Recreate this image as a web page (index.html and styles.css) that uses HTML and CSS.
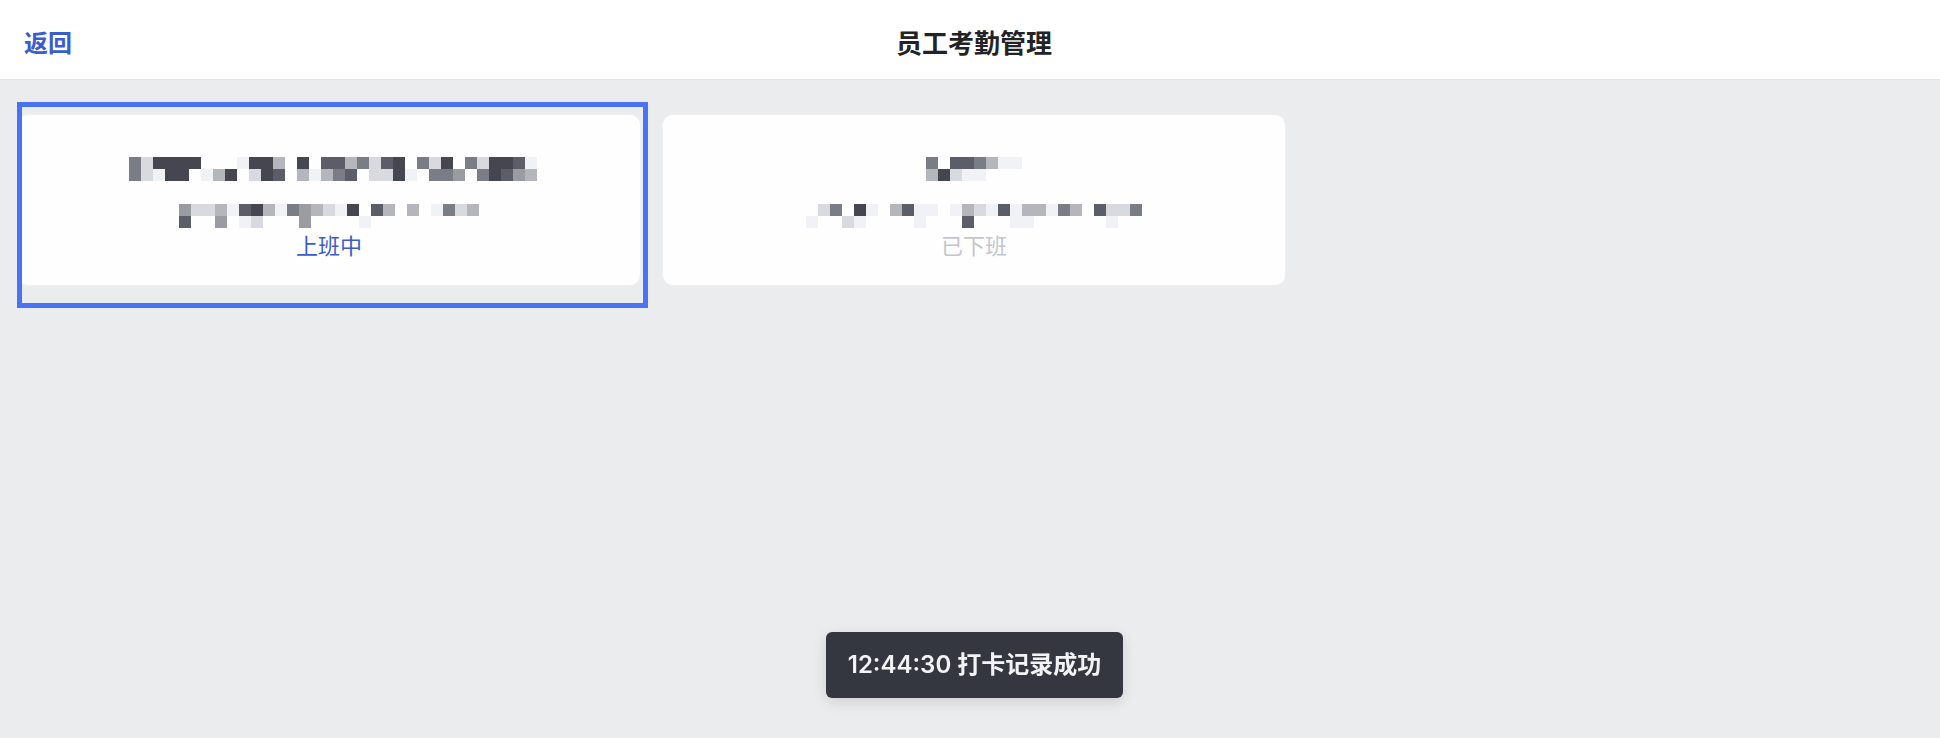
FILE: index.html
```html
<!DOCTYPE html>
<html lang="zh-CN">
<head>
<meta charset="utf-8">
<title>员工考勤管理</title>
<link rel="stylesheet" href="styles.css">
</head>
<body>
<header class="topbar">
  <a class="back">返回</a>
  <h1 class="title">员工考勤管理</h1>
  <span class="spacer"></span>
</header>
<main class="content">
  <div class="grid">
    <div class="card-wrap selected">
      <div class="card">
        <div class="mosaic shift">
          <div class="mrow"><i class="e"></i><i class="b"></i><i class="g"></i><i class="g"></i><i class="g"></i><i class="g"></i><i></i><i></i><i></i><i class="a"></i><i class="g"></i><i class="g"></i><i class="c"></i><i></i><i class="g"></i><i></i><i class="f"></i><i class="f"></i><i class="c"></i><i class="e"></i><i class="b"></i><i class="f"></i><i class="g"></i><i></i><i class="e"></i><i class="b"></i><i class="g"></i><i></i><i class="e"></i><i class="b"></i><i class="g"></i><i class="g"></i><i class="f"></i><i class="a"></i></div>
          <div class="mrow"><i class="e"></i><i class="b"></i><i class="a"></i><i class="g"></i><i class="g"></i><i></i><i class="a"></i><i class="c"></i><i class="g"></i><i></i><i class="b"></i><i class="g"></i><i class="f"></i><i></i><i class="c"></i><i class="a"></i><i class="c"></i><i class="e"></i><i class="f"></i><i></i><i class="b"></i><i class="b"></i><i class="g"></i><i class="a"></i><i></i><i class="e"></i><i class="e"></i><i class="d"></i><i></i><i class="e"></i><i class="g"></i><i class="f"></i><i class="d"></i><i class="c"></i></div>
        </div>
        <div class="mosaic line2">
          <div class="mrow"><i class="d"></i><i class="b"></i><i class="b"></i><i class="c"></i><i class="a"></i><i class="f"></i><i class="g"></i><i class="c"></i><i class="a"></i><i class="e"></i><i class="d"></i><i class="c"></i><i class="b"></i><i class="a"></i><i class="g"></i><i></i><i class="f"></i><i class="c"></i><i></i><i class="c"></i><i></i><i class="a"></i><i class="e"></i><i class="b"></i><i class="c"></i></div>
          <div class="mrow"><i class="f"></i><i></i><i></i><i class="d"></i><i></i><i class="a"></i><i class="b"></i><i></i><i></i><i></i><i class="d"></i><i></i><i></i><i></i><i></i><i class="a"></i><i></i><i></i><i></i><i></i><i></i><i></i><i></i><i></i><i></i></div>
        </div>
        <div class="status on">上班中</div>
      </div>
      <div class="focus-ring"></div>
    </div>
    <div class="card-wrap">
      <div class="card">
        <div class="mosaic">
          <div class="mrow"><i class="e"></i><i></i><i class="f"></i><i class="f"></i><i class="e"></i><i class="c"></i><i class="a"></i><i class="a"></i></div>
          <div class="mrow"><i class="c"></i><i class="g"></i><i class="b"></i><i class="a"></i><i class="a"></i><i></i><i></i><i></i></div>
        </div>
        <div class="mosaic line2">
          <div class="mrow"><i></i><i class="b"></i><i class="e"></i><i></i><i class="g"></i><i class="a"></i><i></i><i class="c"></i><i class="f"></i><i class="a"></i><i class="a"></i><i></i><i class="a"></i><i class="c"></i><i class="b"></i><i class="a"></i><i class="f"></i><i class="a"></i><i class="c"></i><i class="c"></i><i class="a"></i><i class="e"></i><i class="c"></i><i></i><i class="f"></i><i class="b"></i><i class="b"></i><i class="e"></i></div>
          <div class="mrow"><i class="a"></i><i></i><i></i><i class="b"></i><i class="a"></i><i></i><i></i><i></i><i></i><i class="a"></i><i></i><i></i><i></i><i class="f"></i><i></i><i></i><i></i><i class="a"></i><i class="a"></i><i></i><i></i><i></i><i></i><i></i><i></i><i class="a"></i><i></i><i></i></div>
        </div>
        <div class="status off">已下班</div>
      </div>
    </div>
  </div>
</main>
<div class="toast">12:44:30 打卡记录成功</div>
</body>
</html>
```
FILE: styles.css
```css
* { box-sizing: border-box; }
html, body { margin: 0; padding: 0; }
body {
  width: 1940px;
  height: 738px;
  overflow: hidden;
  background: #ebecee;
  font-family: "Inter", "Noto Sans CJK SC", sans-serif;
  color: #222;
}
.topbar {
  height: 79px;
  padding: 9px 0 0 24px;
  background: #fff;
  box-shadow: 0 1px 0 #e3e4e7;
  display: grid;
  grid-template-columns: 1fr auto 1fr;
  align-items: center;
  position: relative;
  z-index: 1;
}
.back {
  font-size: 24px;
  font-weight: 700;
  color: #3a5ccf;
  line-height: 30px;
  justify-self: start;
}
.title {
  margin: 0 0 0 -16px;
  font-size: 26px;
  font-weight: 600;
  line-height: 30px;
  color: #222326;
}
.content {
  padding: 36px 0 0 18px;
}
.grid {
  display: grid;
  grid-template-columns: repeat(3, 622px);
  column-gap: 23px;
}
.card-wrap { position: relative; }
.card {
  height: 170px;
  background: #fefefe;
  border-radius: 10px;
  box-shadow: 0 0 0 1px #eff0f2;
  padding-top: 42px;
  display: flex;
  flex-direction: column;
  align-items: center;
}
.focus-ring {
  position: absolute;
  top: -13px;
  left: -1px;
  right: -8px;
  bottom: -23px;
  border: 5px solid #4a72f4;
  pointer-events: none;
}
.mosaic { display: flex; flex-direction: column; }
.mosaic.shift { margin-left: 8px; }
.mosaic.line2 { margin-top: 23px; }
.mrow { display: flex; height: 12px; }
.mrow i { display: block; width: 12px; height: 12px; background: transparent; }
.mrow i.a { background: #f1f2f5; }
.mrow i.b { background: #d8dadf; }
.mrow i.c { background: #b4b6bc; }
.mrow i.d { background: #9a9ca2; }
.mrow i.e { background: #7a7d85; }
.mrow i.f { background: #5b5e68; }
.mrow i.g { background: #45464f; }
.status {
  margin-top: 1px;
  font-size: 22px;
  line-height: 30px;
  font-family: "Noto Sans CJK SC", sans-serif;
}
.status.on { color: #3a5dcd; }
.status.off { color: #c3c6cd; }
.toast {
  position: fixed;
  top: 632px;
  left: 826px;
  width: 297px;
  height: 66px;
  line-height: 66px;
  text-align: center;
  background: #343740;
  color: #f3f3f5;
  font-size: 24px;
  font-weight: 600;
  border-radius: 6px;
  box-shadow: 0 4px 14px rgba(0, 0, 0, 0.12);
  white-space: nowrap;
}
```
